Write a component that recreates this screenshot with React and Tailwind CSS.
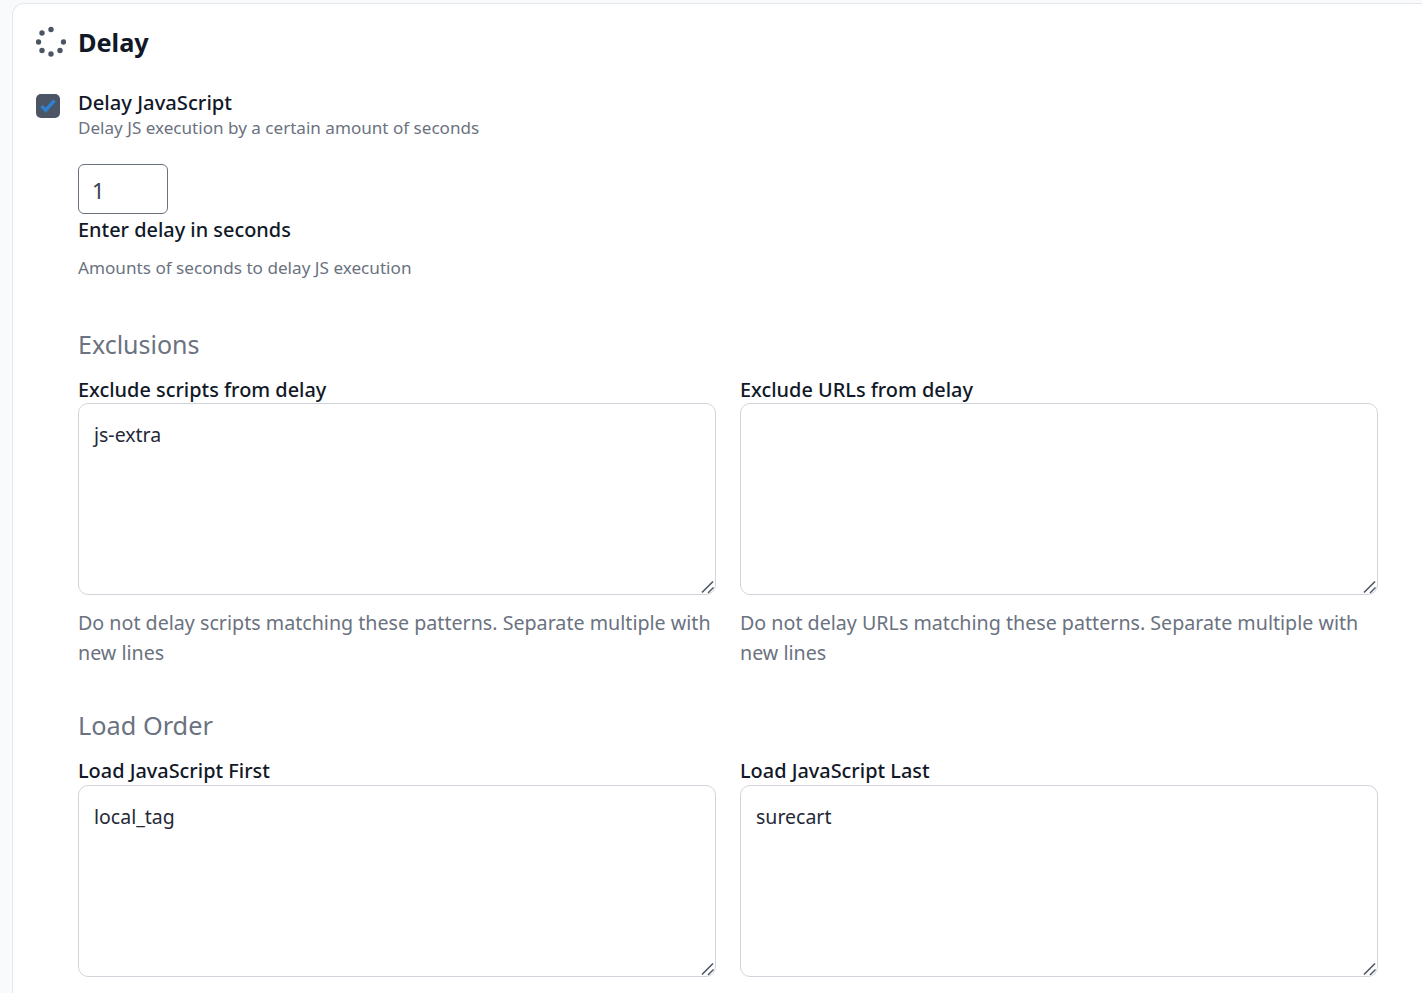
const sans = "font-['Noto_Sans','Open_Sans',sans-serif]";

function SpinnerIcon() {
  const dots = [
    [15, 4.5],
    [6, 8],
    [2.5, 17],
    [6, 25.5],
    [15, 29],
    [24, 25.5],
    [27.5, 17],
  ];
  return (
    <svg width="30" height="34" viewBox="0 0 30 34" className="shrink-0">
      {dots.map(([x, y]) => (
        <circle key={x + "-" + y} cx={x} cy={y} r="2.7" fill="#4b5563" />
      ))}
    </svg>
  );
}

function Checkbox() {
  return (
    <div className="w-6 h-6 mt-[5px] rounded-[5px] bg-[#4b5563] flex items-center justify-center shrink-0">
      <svg width="20" height="20" viewBox="0 0 20 20" fill="none">
        <path d="M3.5 10l4.2 4.2L16.5 4.5" stroke="#2f80d0" strokeWidth="3.4" />
      </svg>
    </div>
  );
}

function Field({ label, value, help, labelClass }) {
  return (
    <div className="flex-1 min-w-0">
      <label className={`block text-[19.9px] leading-[26px] font-medium text-[#111827] ${labelClass}`}>{label}</label>
      <div className="relative">
        <textarea
          readOnly
          value={value}
          className="block w-full h-[192px] resize-none rounded-[10px] border border-[#d1d5db] px-[15px] py-[16px] text-[19.5px] leading-[30px] text-[#1f2937] bg-white outline-none"
        />
        <svg width="14" height="14" viewBox="0 0 14 14" className="absolute right-[1px] bottom-[1px]" fill="none" stroke="#4b5563">
          <path d="M1 12.5L12 1.5" strokeWidth="1.6" />
          <path d="M7 13L12.5 7.5" strokeWidth="1.4" />
        </svg>
      </div>
      {help && <p className="mt-[13px] text-[19.67px] leading-[30px] text-[#6b7280]">{help}</p>}
    </div>
  );
}

export default function App() {
  return (
    <div className={`min-h-[993px] bg-[#f9fafb] pl-3 pt-[3px] overflow-hidden ${sans}`}>
      <div className="h-[990px] bg-white rounded-tl-xl border border-[#e5e7eb] border-r-0 border-b-0 pl-[23px] pr-[44px] pt-5 overflow-hidden">
        <div className="flex items-center gap-3">
          <SpinnerIcon />
          <h2 className="text-[25.3px] leading-[36px] font-bold text-[#111827]">Delay</h2>
        </div>
        <div className="flex gap-[18px] mt-[29px]">
          <Checkbox />
          <div className="flex-1 min-w-0">
            <div className="text-[20.2px] leading-[26px] font-medium text-[#111827]">Delay JavaScript</div>
            <div className="text-[17.08px] leading-[26px] text-[#6b7280]">Delay JS execution by a certain amount of seconds</div>
            <input
              readOnly
              value="1"
              className="block mt-[23px] w-[90px] h-[50px] rounded-[6px] border border-[#6b7280] pl-[13px] pt-[2px] text-[22px] text-[#374151] bg-white outline-none"
            />
            <div className="mt-[1px] text-[19.9px] leading-[30px] font-medium text-[#111827]">Enter delay in seconds</div>
            <div className="mt-[10px] text-[17.15px] leading-[26px] text-[#6b7280]">Amounts of seconds to delay JS execution</div>
            <h3 className="mt-[45px] text-[25px] leading-[36px] text-[#6b7280]">Exclusions</h3>
            <div className="flex gap-6 mt-[15px]">
              <Field label="Exclude scripts from delay" value="js-extra" help="Do not delay scripts matching these patterns. Separate multiple with new lines" />
              <Field label="Exclude URLs from delay" value="" help="Do not delay URLs matching these patterns. Separate multiple with new lines" />
            </div>
            <h3 className="mt-[39px] text-[25.3px] leading-[36px] text-[#6b7280]">Load Order</h3>
            <div className="flex gap-6 mt-[15px]">
              <Field label="Load JavaScript First" value="local_tag" labelClass="mb-[1px]" />
              <Field label="Load JavaScript Last" value="surecart" labelClass="mb-[1px]" />
            </div>
          </div>
        </div>
      </div>
    </div>
  );
}
